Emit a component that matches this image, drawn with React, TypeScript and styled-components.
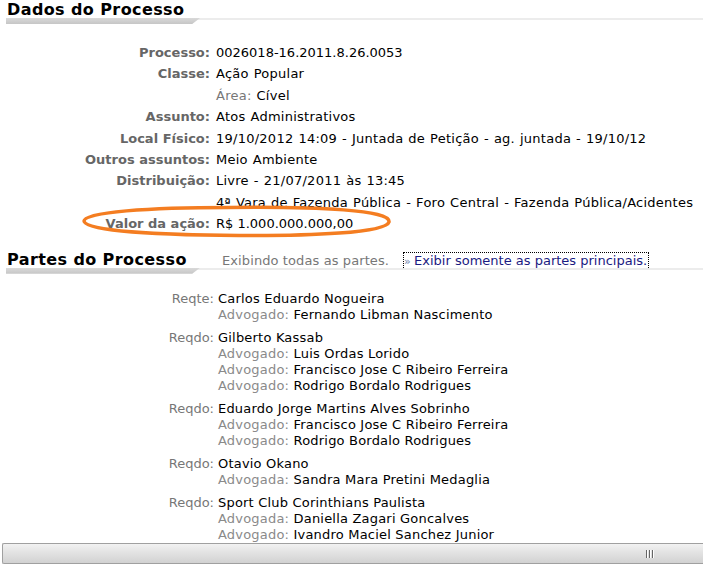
import { createGlobalStyle } from 'styled-components'
import styled from 'styled-components'

type Field = { label?: string; sub?: string; value: string }

const FIELDS: Field[] = [
  { label: 'Processo', value: '0026018-16.2011.8.26.0053' },
  { label: 'Classe', value: 'Ação Popular' },
  { sub: 'Área', value: 'Cível' },
  { label: 'Assunto', value: 'Atos Administrativos' },
  { label: 'Local Físico', value: '19/10/2012 14:09 - Juntada de Petição - ag. juntada - 19/10/12' },
  { label: 'Outros assuntos', value: 'Meio Ambiente' },
  { label: 'Distribuição', value: 'Livre - 21/07/2011 às 13:45' },
  { value: '4ª Vara de Fazenda Pública - Foro Central - Fazenda Pública/Acidentes' },
]

type Parte = { tipo: string; nome: string; advs: [string, string][] }

const PARTES: Parte[] = [
  { tipo: 'Reqte', nome: 'Carlos Eduardo Nogueira', advs: [['Advogado', 'Fernando Libman Nascimento']] },
  {
    tipo: 'Reqdo',
    nome: 'Gilberto Kassab',
    advs: [
      ['Advogado', 'Luis Ordas Lorido'],
      ['Advogado', 'Francisco Jose C Ribeiro Ferreira'],
      ['Advogado', 'Rodrigo Bordalo Rodrigues'],
    ],
  },
  {
    tipo: 'Reqdo',
    nome: 'Eduardo Jorge Martins Alves Sobrinho',
    advs: [
      ['Advogado', 'Francisco Jose C Ribeiro Ferreira'],
      ['Advogado', 'Rodrigo Bordalo Rodrigues'],
    ],
  },
  { tipo: 'Reqdo', nome: 'Otavio Okano', advs: [['Advogada', 'Sandra Mara Pretini Medaglia']] },
  {
    tipo: 'Reqdo',
    nome: 'Sport Club Corinthians Paulista',
    advs: [
      ['Advogada', 'Daniella Zagari Goncalves'],
      ['Advogado', 'Ivandro Maciel Sanchez Junior'],
    ],
  },
]

const Global = createGlobalStyle`
  html, body { margin: 0; padding: 0; background: #fff; }
  body {
    font-family: 'DejaVu Sans', Verdana, sans-serif;
    font-size: 13px;
    color: #000;
  }
`

const Page = styled.div`
  width: 703px;
  height: 566px;
  overflow: hidden;
  display: flex;
  flex-direction: column;
`

const Header = styled.div<{ $top: number }>`
  padding: ${(p) => p.$top}px 0 0 6px;
`

const HeaderRow = styled.div`
  display: flex;
  align-items: baseline;
  height: 17px;
`

const Title = styled.h2`
  margin: 0 0 0 1px;
  font-size: 16px;
  font-weight: bold;
  line-height: 17px;
  letter-spacing: 0.4px;
  width: 215px;
  flex: 0 0 auto;
  white-space: nowrap;
`

const Rule = styled.div`
  display: flex;
  height: 6px;
`

const ThickBar = styled.div`
  width: 194px;
  flex: 0 0 auto;
  background: linear-gradient(to bottom, #d9d9d9, #c6c6c6);
  clip-path: polygon(0 0, 100% 0, 96% 100%, 0 100%);
`

const ThinLine = styled.div`
  flex: 1;
  height: 2px;
  margin-left: -6px;
  background: #ececec;
`

const Note = styled.span`
  color: #777;
  font-size: 13px;
  margin-left: 0;
  letter-spacing: 0.1px;
`

const FilterLink = styled.a`
  margin-left: 15px;
  color: #1b1b82;
  text-decoration: none;
  outline: 1px dotted #000;
  outline-offset: 0;
  padding: 0 1px 0 0;
  line-height: 15px;
  cursor: pointer;
`

const LinkIcon = styled.span`
  display: inline-block;
  width: 10px;
  font-size: 11px;
  color: #6f86b0;
  letter-spacing: -1px;
`

const DataGrid = styled.div`
  display: grid;
  grid-template-columns: 210px 1fr;
  column-gap: 6px;
  padding-top: 18px;
  line-height: 21.4px;
  white-space: nowrap;
`

const Label = styled.div`
  text-align: right;
  color: #666;
  font-weight: bold;
`

const Value = styled.div<{ $wide?: boolean }>`
  color: #000;
  letter-spacing: ${(p) => (p.$wide ? '0.25px' : '0')};
  word-spacing: ${(p) => (p.$wide ? '0.6px' : '0')};
`

const SubLabel = styled.span`
  color: #777;
`

const Highlight = styled.div`
  position: relative;
  grid-column: 1 / -1;
  display: grid;
  grid-template-columns: 210px 1fr;
  column-gap: 6px;
`

const Ring = styled.svg`
  position: absolute;
  left: 79px;
  top: -9px;
  pointer-events: none;
`

const Partes = styled.div`
  padding-top: 17px;
  display: flex;
  flex-direction: column;
  gap: 7px;
  line-height: 16px;
  white-space: nowrap;
`

const ParteRow = styled.div`
  display: grid;
  grid-template-columns: 214px 1fr;
  column-gap: 4px;
`

const ParteTipo = styled.div`
  text-align: right;
  color: #777;
`

const AdvLine = styled.div`
  color: #000;
  letter-spacing: 0.2px;
`

const AdvLabel = styled.span`
  color: #8a8a8a;
`

const ScrollTrack = styled.div`
  margin: auto 0 2px 2px;
  height: 19px;
  border: 1px solid #a0a0a0;
  border-right: none;
  border-radius: 2px 0 0 2px;
  background: linear-gradient(to bottom, #f2f2f2 0%, #e4e4e4 40%, #d2d2d2 100%);
  display: flex;
  align-items: center;
  justify-content: flex-end;
  padding-right: 50px;
`

const Grip = styled.div`
  display: flex;
  gap: 2px;
`

const GripLine = styled.div`
  width: 1px;
  height: 8px;
  background: #666;
  box-shadow: 1px 0 0 #fff;
`

export default function App() {
  return (
    <Page>
      <Global />
      <Header $top={1}>
        <HeaderRow>
          <Title>Dados do Processo</Title>
        </HeaderRow>
        <Rule>
          <ThickBar />
          <ThinLine />
        </Rule>
      </Header>

      <DataGrid>
        {FIELDS.map((f, i) => (
          <Highlight key={i}>
            <Label>{f.label ? `${f.label}:` : ''}</Label>
            <Value $wide={i > 0}>
              {f.sub && <SubLabel>{f.sub}: </SubLabel>}
              {f.value}
            </Value>
          </Highlight>
        ))}
        <Highlight>
          <Label>Valor da ação:</Label>
          <Value>R$ 1.000.000.000,00</Value>
          <Ring width="316" height="34" viewBox="0 0 316 34">
            <path
              d="M150 3.5 C 240 2.5, 312 6, 310 18 C 307 29, 230 32, 160 31.5 C 80 31, 5 27, 5 17 C 5 8, 70 3.5, 150 3.5 Z"
              fill="none"
              stroke="#f47d21"
              strokeWidth="3.5"
            />
          </Ring>
        </Highlight>
      </DataGrid>

      <Header $top={16}>
        <HeaderRow>
          <Title>Partes do Processo</Title>
          <Note>Exibindo todas as partes.</Note>
          <FilterLink>
            <LinkIcon>»</LinkIcon>Exibir somente as partes principais.
          </FilterLink>
        </HeaderRow>
        <Rule>
          <ThickBar />
          <ThinLine />
        </Rule>
      </Header>

      <Partes>
        {PARTES.map((p, i) => (
          <ParteRow key={i}>
            <ParteTipo>{p.tipo}:</ParteTipo>
            <div>
              <AdvLine>{p.nome}</AdvLine>
              {p.advs.map(([l, n], j) => (
                <AdvLine key={j}>
                  <AdvLabel>{l}: </AdvLabel>
                  {n}
                </AdvLine>
              ))}
            </div>
          </ParteRow>
        ))}
      </Partes>

      <ScrollTrack>
        <Grip>
          <GripLine />
          <GripLine />
          <GripLine />
        </Grip>
      </ScrollTrack>
    </Page>
  )
}
